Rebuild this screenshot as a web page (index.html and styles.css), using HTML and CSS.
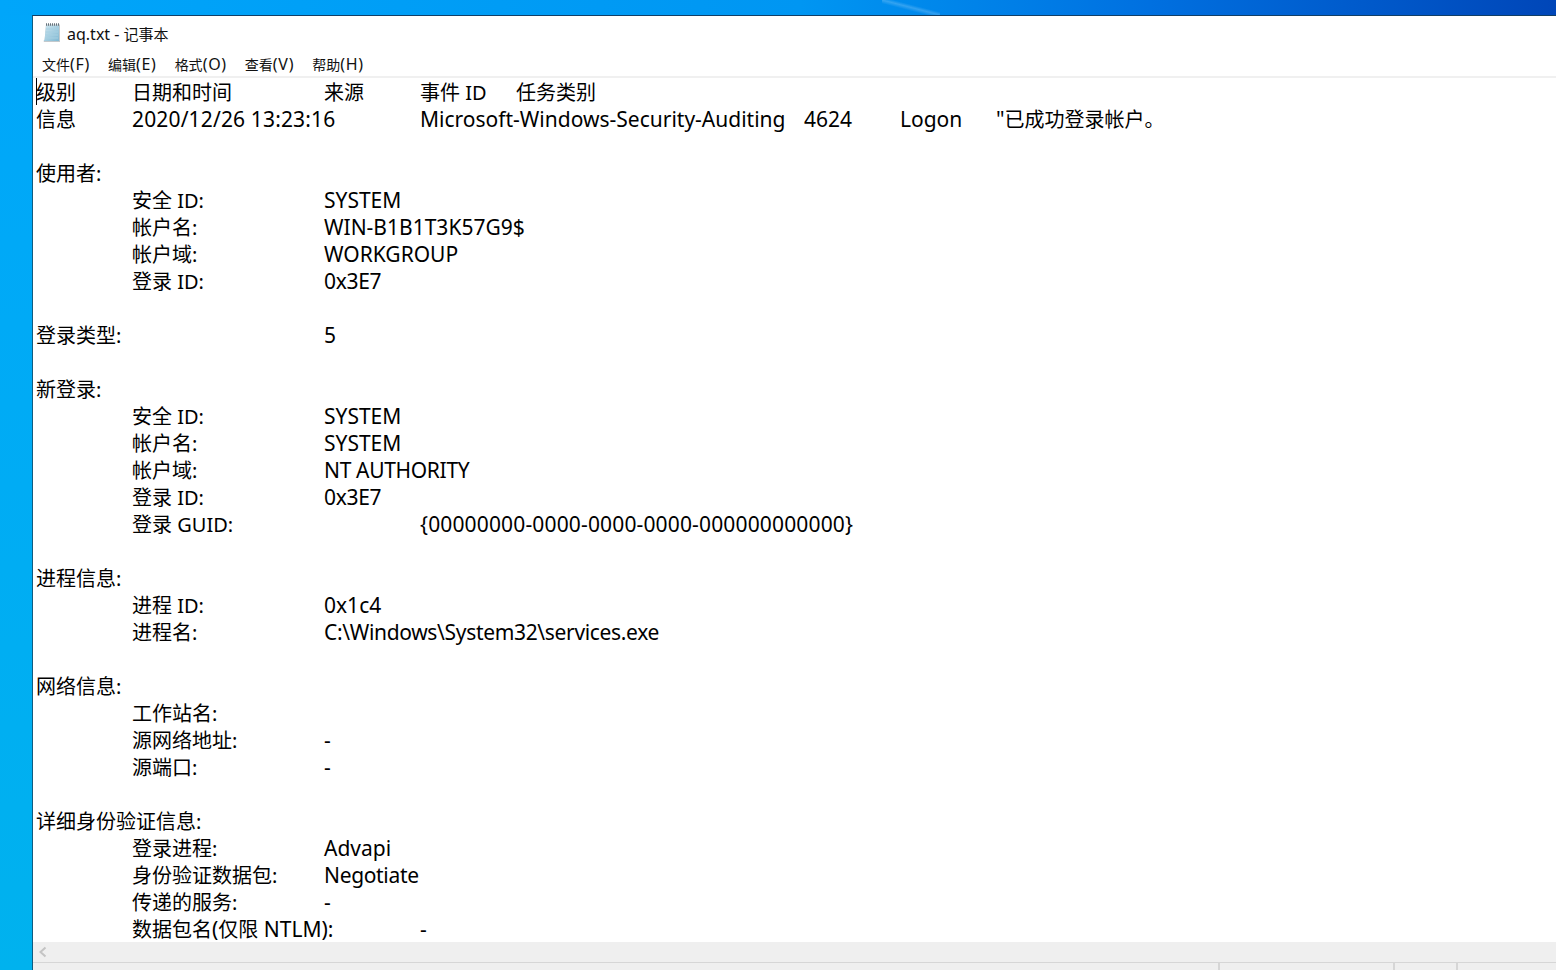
FILE: index.html
```html
<!DOCTYPE html>
<html lang="zh-CN">
<head>
<meta charset="utf-8">
<title>aq.txt - 记事本</title>
<link rel="stylesheet" href="styles.css">
</head>
<body>
<main class="window">
<header class="titlebar">
<svg class="app-icon" width="19" height="20" viewBox="0 0 19 20" aria-hidden="true">
<defs><linearGradient id="pg" x1="0" y1="0" x2="1" y2="1"><stop offset="0" stop-color="#cfe6f0"/><stop offset="1" stop-color="#7fb8d2"/></linearGradient></defs>
<path d="M4 1.5H18V19H1.5L2.6 17Z" fill="#c4c9cc"/>
<path d="M4 2.5H17V18H1.5L2.6 16.5Z" fill="url(#pg)"/>
<path d="M4 1.5H17" stroke="#66747e" stroke-width="2.4" stroke-dasharray="1 1"/>
<path d="M4 6H16M3.7 9H16M3.4 12H16M3 15H16" stroke="#a6d0e2" stroke-width="1"/>
</svg>
<span class="title"><span class="la">aq.txt - </span><span>记事本</span></span>
</header>
<nav class="menubar">
<span class="menu-item"><span>文件</span><span class="la">(F)</span></span>
<span class="menu-item"><span>编辑</span><span class="la">(E)</span></span>
<span class="menu-item"><span>格式</span><span class="la">(O)</span></span>
<span class="menu-item"><span>查看</span><span class="la">(V)</span></span>
<span class="menu-item"><span>帮助</span><span class="la">(H)</span></span>
</nav>
<div class="editor"><span class="caret"></span><div class="doc">
<div class="line"><span>级别	</span><span>日期和时间	</span><span>来源	</span><span>事件 ID	</span><span>任务类别</span></div>
<div class="line"><span>信息	</span><span class="la wide">2020/12/26 13:23:16	</span><span class="la">Microsoft-Windows-Security-Auditing	</span><span class="la">4624	</span><span class="la">Logon	</span><span class="la">"</span><span>已成功登录帐户。</span></div>
<div class="line"></div>
<div class="line"><span>使用者:</span></div>
<div class="line"><span>	安全 ID:		</span><span class="la">SYSTEM</span></div>
<div class="line"><span>	帐户名:		</span><span class="la">WIN-B1B1T3K57G9$</span></div>
<div class="line"><span>	帐户域:		</span><span class="la">WORKGROUP</span></div>
<div class="line"><span>	登录 ID:		</span><span class="la narrow">0x3E7</span></div>
<div class="line"></div>
<div class="line"><span>登录类型:			</span><span class="la">5</span></div>
<div class="line"></div>
<div class="line"><span>新登录:</span></div>
<div class="line"><span>	安全 ID:		</span><span class="la">SYSTEM</span></div>
<div class="line"><span>	帐户名:		</span><span class="la">SYSTEM</span></div>
<div class="line"><span>	帐户域:		</span><span class="la narrow">NT AUTHORITY</span></div>
<div class="line"><span>	登录 ID:		</span><span class="la narrow">0x3E7</span></div>
<div class="line"><span>	登录 GUID:		</span><span class="la wide">{00000000-0000-0000-0000-000000000000}</span></div>
<div class="line"></div>
<div class="line"><span>进程信息:</span></div>
<div class="line"><span>	进程 ID:		</span><span class="la">0x1c4</span></div>
<div class="line"><span>	进程名:		</span><span class="la narrow">C:\Windows\System32\services.exe</span></div>
<div class="line"></div>
<div class="line"><span>网络信息:</span></div>
<div class="line"><span>	工作站名:</span></div>
<div class="line"><span>	源网络地址:	</span><span class="la">-</span></div>
<div class="line"><span>	源端口:		</span><span class="la">-</span></div>
<div class="line"></div>
<div class="line"><span>详细身份验证信息:</span></div>
<div class="line"><span>	登录进程:		</span><span class="la">Advapi</span></div>
<div class="line"><span>	身份验证数据包:	</span><span class="la narrow">Negotiate</span></div>
<div class="line"><span>	传递的服务:	</span><span class="la">-</span></div>
<div class="line"><span>	数据包名</span><span class="la">(</span><span>仅限</span><span class="la"> NTLM):	</span><span class="la">-</span></div>
</div></div>
<div class="hscroll">
<svg class="arrow" width="10" height="12" viewBox="0 0 10 12" aria-hidden="true"><path d="M7.5 1.5L2.5 6L7.5 10.5" fill="none" stroke="#c4c4c4" stroke-width="2"/></svg>
</div>
<footer class="statusbar">
<span class="pane pane-main"></span>
<span class="pane pane-pos"></span>
<span class="pane pane-zoom"></span>
<span class="pane pane-end"></span>
</footer>
</main>
</body>
</html>
```
FILE: styles.css
```css
* { box-sizing: border-box; }
html, body { margin: 0; height: 970px; overflow: hidden; }
body {
  position: relative;
  padding: 15px 0 0 32px;
  background:
    linear-gradient(90deg, #00a6fa 0, #0096f2 800px, #0070e0 1150px, #0046b8 1556px) top / 100% 15px no-repeat,
    linear-gradient(180deg, #00a6fa, #00b2ee);
  font-family: "Noto Sans", "Noto Sans CJK SC", sans-serif;
}
body::before {
  content: "";
  position: absolute;
  left: 882px;
  top: 0;
  width: 58px;
  height: 15px;
  background: linear-gradient(14.5deg, transparent 38%, rgba(255, 255, 255, .2) 50%, transparent 60%);
}
.window {
  height: 955px;
  display: flex;
  flex-direction: column;
  background: #fff;
  border-top: 1px solid #123f66;
  border-left: 1px solid #0f5c80;
  color: #000;
}
.titlebar {
  height: 34px;
  flex: none;
  display: flex;
  align-items: center;
  padding: 0 0 0 9px;
  gap: 6px;
}
.title { font-size: 15px; color: #111; }
.title .la { font-size: 16px; }
.menubar {
  height: 28px;
  flex: none;
  display: flex;
  align-items: center;
  padding: 2px 0 0 9px;
  gap: 18px;
  border-bottom: 2px solid #f0f0f0;
}
.menu-item { font-size: 14px; color: #111; }
.menu-item .la { font-size: 16px; letter-spacing: .7px; }
.editor {
  flex: 1;
  min-height: 0;
  overflow: hidden;
  position: relative;
  padding: 1px 0 0 3px;
}
.caret {
  position: absolute;
  left: 3px;
  top: 0;
  width: 1px;
  height: 27px;
  background: #000;
}
.doc {
  font-size: 20px;
  line-height: 27px;
}
.line { height: 27px; white-space: pre; tab-size: 96px; }
.la { font-size: 21px; line-height: 1; }
.wide { letter-spacing: .15px; }
.narrow { letter-spacing: -.33px; }
.hscroll {
  height: 21px;
  flex: none;
  display: flex;
  align-items: center;
  padding-left: 5px;
  background: #efefef;
  border-bottom: 1px solid #d6d6d6;
}
.statusbar {
  height: 7px;
  flex: none;
  display: flex;
  background: #efefef;
}
.pane { border-right: 2px solid #d6d6d6; }
.pane-main { width: 1187px; }
.pane-pos { width: 175px; }
.pane-zoom { width: 63px; }
.pane-end { flex: 1; border-right: 0; }
```
